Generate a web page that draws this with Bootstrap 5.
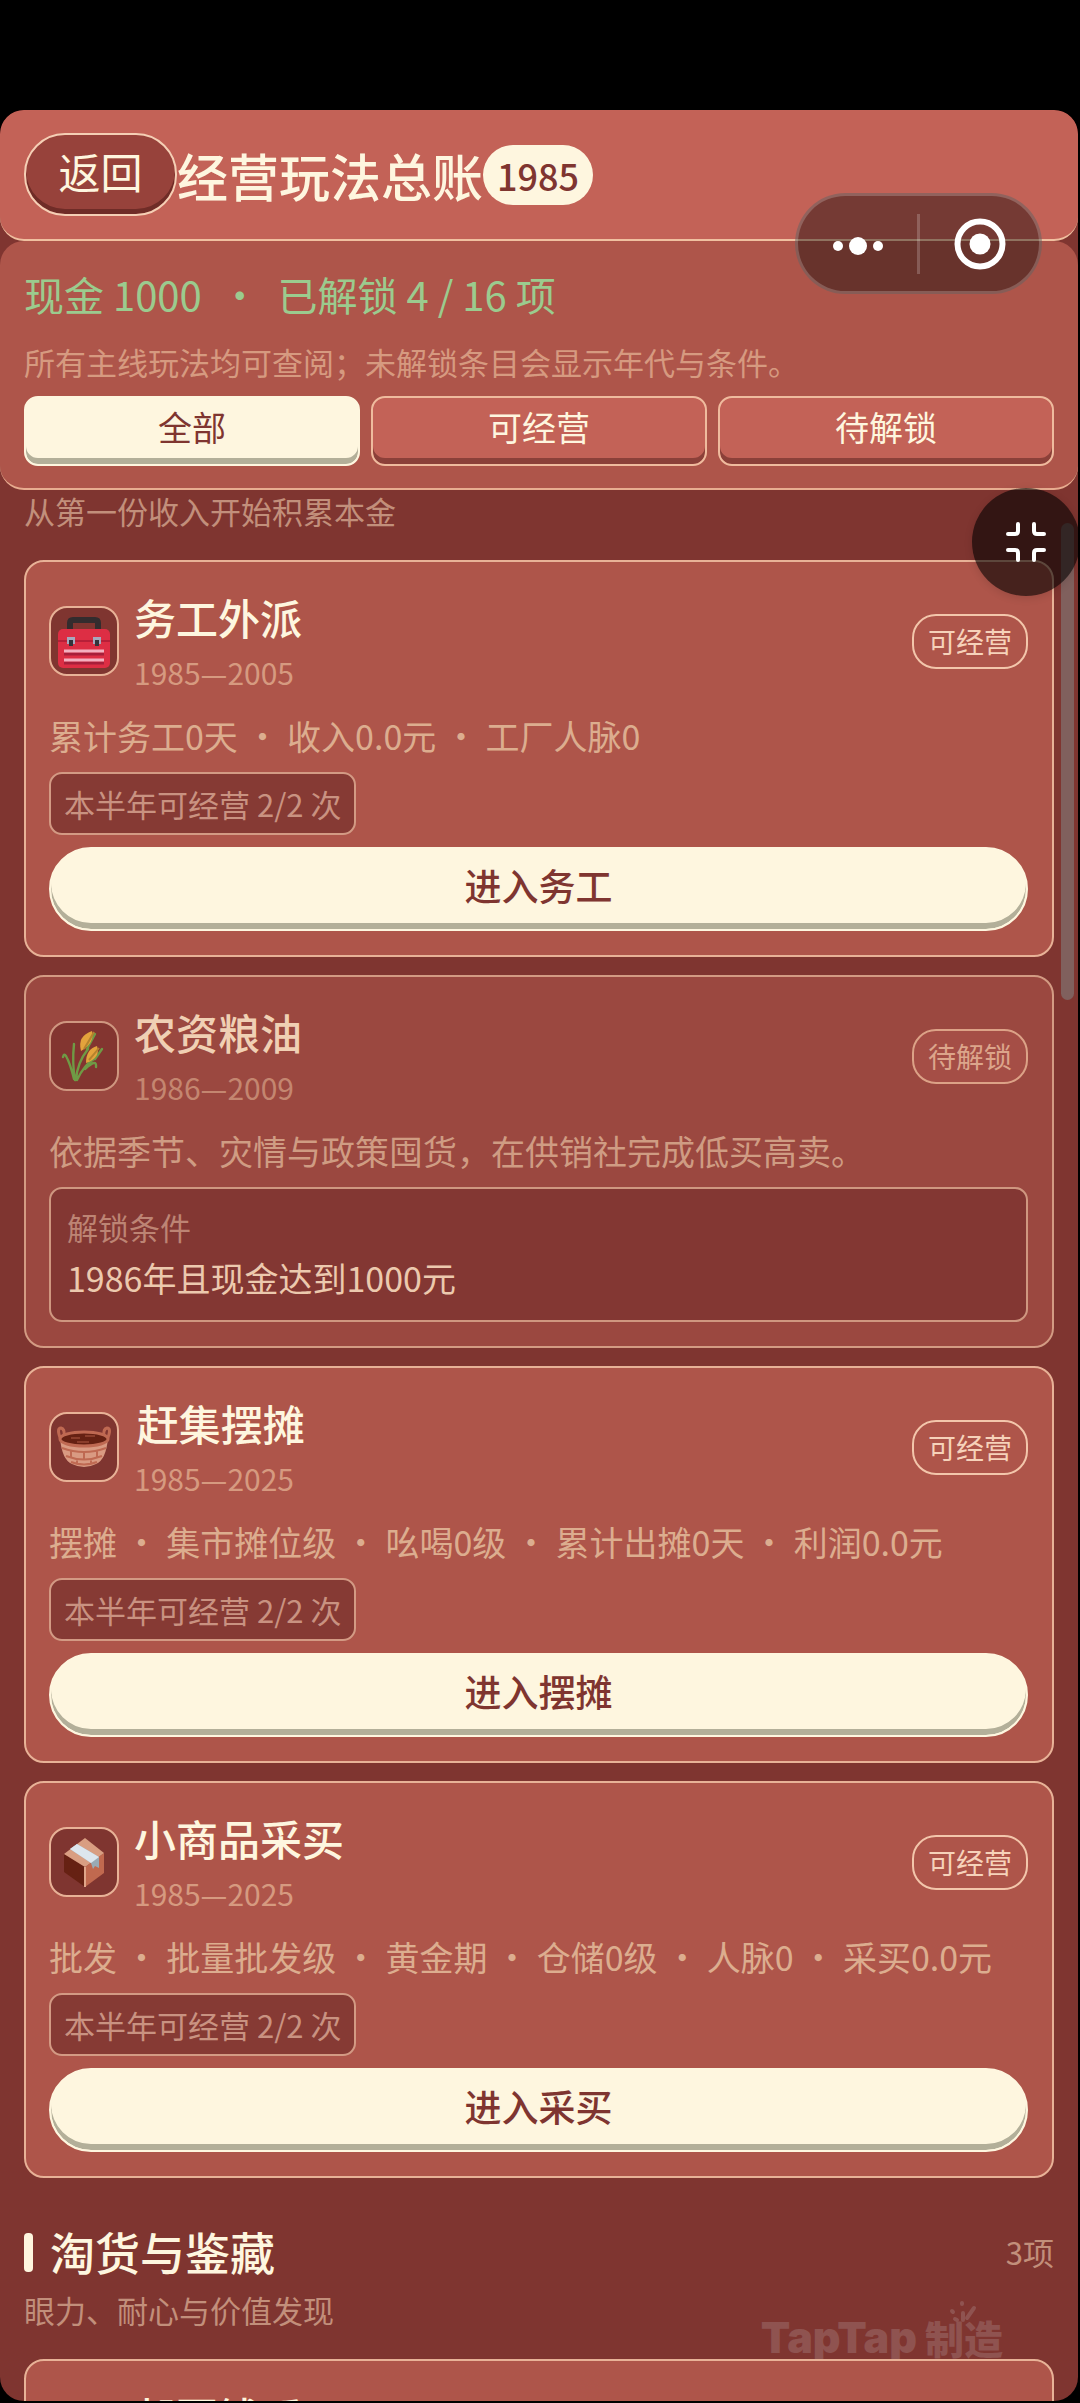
<!DOCTYPE html>
<html lang="zh-CN">
<head>
<meta charset="utf-8">
<meta name="viewport" content="width=device-width, initial-scale=1">
<title>经营玩法总账</title>
<link rel="stylesheet" href="https://cdn.jsdelivr.net/npm/bootstrap@5.3.0/dist/css/bootstrap.min.css">
<style>
:root{--cream:#fef6df;--line:#e8b297;--deep:#7f3530;--panel:#ae554a;--accent:#c36257;--soft:#dcad8f}
body{background:#000;color:var(--cream);font-family:"Noto Sans CJK SC","Noto Sans",sans-serif;height:100vh;overflow:hidden;padding:110px 2px 2px 0}
h1,h2,h3,p{margin:0;font-weight:500}
button{font-family:inherit;color:inherit}
.app{background:var(--deep);border-radius:24px;height:100%}
.topbar{background:var(--accent);border-bottom:2px solid #f0c0a0;border-radius:24px;padding:23px 24px}
.back{width:153px;height:83px;border:2px solid #f5cfb5;border-radius:41px;background:#97423b;box-shadow:inset 0 -5px #6f2c27;font-size:42px;line-height:1;padding:0 0 8px}
.topbar h1{font-size:51px;line-height:60px}
.year{background:var(--cream);color:var(--deep);font-size:36px;font-weight:500;line-height:60px;border-radius:30px;padding:0 14px}
.summary{background:var(--panel);border-bottom:2px solid #e8ad90;border-radius:24px;padding:22px 24px}
.cash{color:#9bcb8e;font-size:40px;line-height:62px;font-weight:400;margin-bottom:13px}
.hint{color:#d69a80;font-size:31px;line-height:47px;font-weight:400;margin-bottom:11px}
.tabs{gap:11px}
.tab-btn{flex:1 1 0;height:70px;border:2px solid #efbb9e;border-radius:14px;background:var(--accent);box-shadow:inset 0 -6px #8b4039;font-size:34px;line-height:1;padding:0 0 8px}
.tab-btn.on{background:var(--cream);border-color:var(--cream);box-shadow:inset 0 -6px #b3af99;color:var(--deep)}
.feed{flex:1 1 0;min-height:0;overflow:hidden;padding:0 24px}
.sub{color:#c28f7b;font-size:31px;line-height:42px;font-weight:400;margin-bottom:28px}
.group{padding-top:25px;margin-bottom:6px}
.group h2{font-size:45px;line-height:62px}
.bar{width:9px;height:39px;border-radius:4px;background:var(--cream);margin-right:17px}
.count{color:#c28f7b;font-size:31px}
.entry{position:relative;background:var(--panel);border:2px solid var(--line);border-radius:20px;padding:24px 24px 24px 23px;margin-bottom:18px}
.head{height:110px;margin-bottom:14px}
.pic{width:70px;height:70px;border:2px solid var(--line);border-radius:18px;background:var(--deep);margin-right:15px}
.pic svg{width:54px;height:54px}
.entry h3{font-size:42px;line-height:62px}
.span{font-size:30px;line-height:48px;color:#d69a80;font-weight:400}
.state{font-size:28px;line-height:51px;border:2px solid #f3c6ab;border-radius:24px;padding:0 14px;color:#f6d2ba}
.desc{font-size:34px;line-height:52px;color:var(--soft);font-weight:400;margin-bottom:10px}
.chip{display:inline-block;vertical-align:top;font-size:31px;line-height:59px;border:2px solid #d39a84;border-radius:13px;background:#863a34;color:#c99281;padding:0 13px;margin-bottom:12px}
.enter{display:block;width:100%;height:84px;border:2px solid var(--cream);border-radius:42px;background:var(--cream);box-shadow:inset 0 -6px #b3af99;color:var(--deep);font-size:37px;font-weight:500;line-height:1;padding:0 0 8px}
.locked{background:#9b4840;border-color:#d39b83}
.locked h3{color:#f0d0b4}
.locked .pic{border-color:#cf9780;background:#833530}
.locked .span{color:#c48670}
.locked .state{background:#a54e46;border-color:#dca287;color:#dca58b}
.locked .desc{color:#cf9c83}
.need{border:2px solid #cf9780;border-radius:13px;background:#833733;padding:14px 16px 15px}
.need-label{font-size:31px;line-height:48px;font-weight:400;color:#bd8474}
.need-text{font-size:34px;line-height:54px;font-weight:400;color:#ecc9ae}
.scrollbar-thumb{position:absolute;right:6px;top:523px;width:13px;height:477px;border-radius:7px;background:#80605d}
.shrink{position:absolute;right:0;top:488px;width:108px;height:108px;border:0;border-radius:50%;background:rgba(0,0,0,.6);box-shadow:0 2px 8px rgba(0,0,0,.12);padding:0}
.capsule{position:absolute;right:38px;top:193px;width:247px;height:101px;border:3px solid rgba(255,255,255,.2);border-radius:51px;background:rgba(0,0,0,.4)}
.capsule button{flex:1;border:0;background:none;padding:0}
.capsule i{width:3px;height:60px;background:rgba(255,255,255,.2)}
.mark-logo{position:absolute;right:77px;bottom:38px;color:#8f5350;font-weight:900;line-height:56px}
.mark-logo b{font:900 43px/56px Inter,sans-serif}
.mark-logo span{font-size:39px;margin-left:8px}
.mark-logo svg{position:absolute;right:26px;top:-8px}
</style>
</head>
<body>
<main class="app d-flex flex-column overflow-hidden">
  <header class="topbar d-flex align-items-center">
    <button class="back" type="button">返回</button>
    <h1>经营玩法总账</h1>
    <span class="year">1985</span>
  </header>
  <section class="summary">
    <p class="cash">现金 1000&nbsp; ・&nbsp; 已解锁 4 / 16 项</p>
    <p class="hint">所有主线玩法均可查阅；未解锁条目会显示年代与条件。</p>
    <div class="tabs d-flex">
      <button class="tab-btn on" type="button">全部</button>
      <button class="tab-btn" type="button">可经营</button>
      <button class="tab-btn" type="button">待解锁</button>
    </div>
  </section>
  <section class="feed">
    <p class="sub">从第一份收入开始积累本金</p>

    <article class="entry">
      <div class="head d-flex align-items-center">
        <div class="pic d-flex align-items-center justify-content-center">
          <svg viewBox="0 0 54 54" aria-hidden="true"><path d="M13 18V9q0-3 3-3h22q3 0 3 3v9" fill="none" stroke="#332c2e" stroke-width="6"/><rect x="1" y="15" width="52" height="39" rx="5" fill="#dd2e44"/><path d="M1 27h52" stroke="#b71f38" stroke-width="2"/><path d="M7 40h40M7 49h40" stroke="#a81f3a" stroke-width="3"/><path d="M7 37h40M7 46h40" stroke="#f4b0bf" stroke-width="3"/><path d="M10 23h8v7h-8zM36 23h8v7h-8z" fill="#a6a8bd"/><path d="M12 26h4v6h-4zM38 26h4v6h-4z" fill="#33333a"/></svg>
        </div>
        <div class="flex-grow-1"><h3>务工外派</h3><p class="span">1985—2005</p></div>
        <span class="state">可经营</span>
      </div>
      <p class="desc">累计务工0天 ・ 收入0.0元 ・ 工厂人脉0</p>
      <span class="chip">本半年可经营 2/2 次</span>
      <button class="enter" type="button">进入务工</button>
    </article>

    <article class="entry locked">
      <div class="head d-flex align-items-center">
        <div class="pic d-flex align-items-center justify-content-center">
          <svg viewBox="0 0 54 54" aria-hidden="true"><g fill="none" stroke="#6f9a45" stroke-width="2.4" stroke-linecap="round"><path d="M19 51Q20 34 31 20M18 51Q15 34 17 15M20 51Q27 36 37 30M17 50Q13 34 9 27M28 40Q40 29 39 38M30 20L38 5M38 30L45 20M9 27Q7 24 6 28"/></g><path d="M24 22Q20 7 35 2Q38 14 24 22Z" fill="#e3a33c"/><path d="M29 34Q29 20 40 17Q44 29 29 34Z" fill="#e3a33c"/><path d="M27 20Q32 12 37 3M32 31Q38 24 42 19" stroke="#b5822d" stroke-width="2" fill="none"/></svg>
        </div>
        <div class="flex-grow-1"><h3>农资粮油</h3><p class="span">1986—2009</p></div>
        <span class="state">待解锁</span>
      </div>
      <p class="desc">依据季节、灾情与政策囤货，在供销社完成低买高卖。</p>
      <div class="need"><p class="need-label">解锁条件</p><p class="need-text">1986年且现金达到1000元</p></div>
    </article>

    <article class="entry">
      <div class="head d-flex align-items-center">
        <div class="pic d-flex align-items-center justify-content-center">
          <svg viewBox="0 0 54 54" aria-hidden="true"><path d="M4 20Q-1 8 4 8Q8 9 7 16M50 20Q55 8 50 8Q46 9 47 16" fill="none" stroke="#bf6952" stroke-width="3"/><path d="M3 18Q5 40 15 44Q27 50 39 44Q49 40 51 18Z" fill="#d99a82"/><ellipse cx="27" cy="19" rx="24" ry="7" fill="#662113" stroke="#bf6952" stroke-width="3"/><path d="M14 18h9m5-2h10M20 22h12" stroke="#8a3d2b" stroke-width="2"/><path d="M5 28Q27 36 49 28M9 36Q27 43 45 36M14 42Q27 47 40 42M14 31v7M27 33v7M40 31v7M20 39v6M34 39v6" fill="none" stroke="#bf6952" stroke-width="2"/></svg>
        </div>
        <div class="flex-grow-1"><h3>&#8202;赶集摆摊</h3><p class="span">1985—2025</p></div>
        <span class="state">可经营</span>
      </div>
      <p class="desc">摆摊 ・ 集市摊位级 ・ 吆喝0级 ・ 累计出摊0天 ・ 利润0.0元</p>
      <span class="chip">本半年可经营 2/2 次</span>
      <button class="enter" type="button">进入摆摊</button>
    </article>

    <article class="entry">
      <div class="head d-flex align-items-center">
        <div class="pic d-flex align-items-center justify-content-center">
          <svg viewBox="0 0 54 54" aria-hidden="true"><path d="M7 19L28 32V52L7 37Z" fill="#662113"/><path d="M28 32L47 18V38L28 52Z" fill="#c1694f"/><path d="M7 19L28 3L47 18L28 32Z" fill="#d99e82"/><path d="M28 32V52" stroke="#e0a58a" stroke-width="2"/><path d="M13 14L20 9L42 22V33L38 31L36 34L34 28Z" fill="#99aab5"/><path d="M13 14L20 9L42 22L34 28Z" fill="#dde6ee"/></svg>
        </div>
        <div class="flex-grow-1"><h3>小商品采买</h3><p class="span">1985—2025</p></div>
        <span class="state">可经营</span>
      </div>
      <p class="desc">批发 ・ 批量批发级 ・ 黄金期 ・ 仓储0级 ・ 人脉0 ・ 采买0.0元</p>
      <span class="chip">本半年可经营 2/2 次</span>
      <button class="enter" type="button">进入采买</button>
    </article>

    <div class="group d-flex align-items-center">
      <span class="bar"></span><h2 class="flex-grow-1">淘货与鉴藏</h2><span class="count">3项</span>
    </div>
    <p class="sub">眼力、耐心与价值发现</p>
    <div class="mark-logo d-flex align-items-center" aria-hidden="true"><b>TapTap</b><span>制造</span>
      <svg width="28" height="22" viewBox="0 0 28 22" stroke="#8f5350" stroke-width="4" stroke-linecap="round"><path d="M13 2v1M3 10l1 1M6 18l2 1M14 12v7M25 7l-7 10"/></svg>
    </div>
    <article class="entry">
      <div class="head d-flex align-items-center">
        <div class="pic"></div>
        <div class="flex-grow-1"><h3>邮票钱币</h3><p class="span">1985—2025</p></div>
      </div>
    </article>
  </section>
</main>

<div class="scrollbar-thumb"></div>
<button class="shrink" type="button" aria-label="缩小">
  <svg width="40" height="40" viewBox="0 0 40 40" fill="none" stroke="#fff" stroke-width="4" stroke-linecap="round"><path d="M12 2v7q0 3-3 3H2M28 2v7q0 3 3 3h7M12 38v-7q0-3-3-3H2M28 38v-7q0-3 3-3h7"/></svg>
</button>
<div class="capsule d-flex align-items-center">
  <button type="button" aria-label="更多"><svg width="52" height="20" viewBox="0 0 52 20" fill="#fff"><circle cx="6" cy="10" r="5"/><circle cx="26" cy="10" r="9"/><circle cx="46" cy="10" r="5"/></svg></button>
  <i></i>
  <button type="button" aria-label="关闭"><svg width="52" height="52" viewBox="0 0 52 52"><circle cx="26" cy="26" r="22.5" fill="none" stroke="#fff" stroke-width="6"/><circle cx="26" cy="26" r="10.5" fill="#fff"/></svg></button>
</div>
<script src="https://cdn.jsdelivr.net/npm/bootstrap@5.3.0/dist/js/bootstrap.bundle.min.js"></script>
</body>
</html>
